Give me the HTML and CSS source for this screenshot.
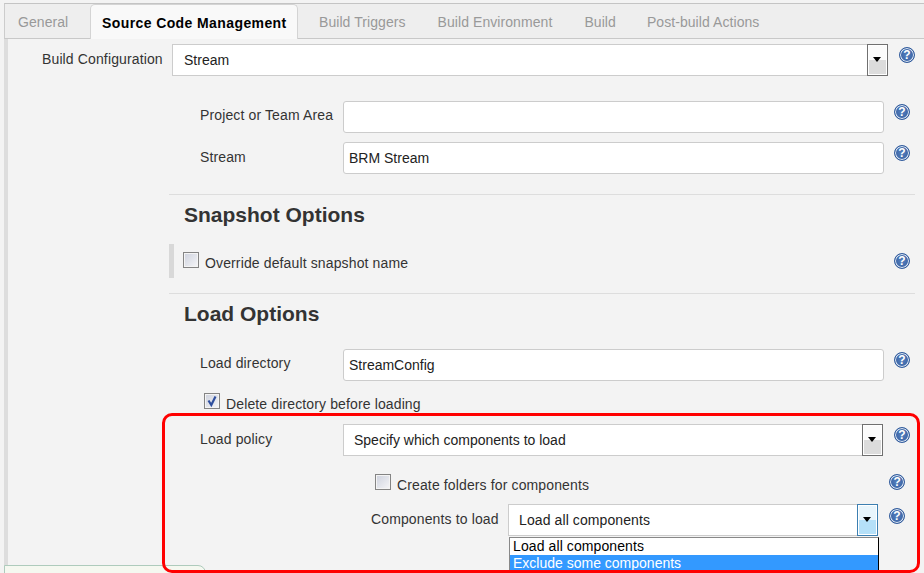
FILE: index.html
```html
<!DOCTYPE html>
<html lang="en">
<head>
<meta charset="utf-8">
<title>Source Code Management</title>
<link rel="stylesheet" href="styles.css">
</head>
<body>
<div class="page">
  <nav class="tabs">
    <span class="tab">General</span>
    <span class="tab tab-active">Source Code Management</span>
    <span class="tab">Build Triggers</span>
    <span class="tab">Build Environment</span>
    <span class="tab tab-build">Build</span>
    <span class="tab">Post-build Actions</span>
  </nav>
  <main class="content">
    <div class="row row-config">
      <label class="label label-config">Build Configuration</label>
      <div class="select select-config"><span>Stream</span><i class="arrow"></i></div>
      <span class="help help-config">?</span>
    </div>
    <div class="row row-project">
      <label class="label label-sub">Project or Team Area</label>
      <div class="input"></div>
      <span class="help">?</span>
    </div>
    <div class="row row-stream">
      <label class="label label-sub">Stream</label>
      <div class="input">BRM Stream</div>
      <span class="help">?</span>
    </div>
    <section class="section section-snapshot">
      <h2 class="heading">Snapshot Options</h2>
      <div class="override">
        <span class="check"></span>
        <span class="check-text">Override default snapshot name</span>
        <span class="help help-override">?</span>
      </div>
    </section>
    <section class="section section-load">
      <h2 class="heading">Load Options</h2>
      <div class="row row-dir">
        <label class="label label-sub">Load directory</label>
        <div class="input">StreamConfig</div>
        <span class="help">?</span>
      </div>
      <div class="delete">
        <span class="check check-on"><svg viewBox="0 0 14 14"><path d="M3.5 6.5l2.8 4.5 4.2-8.5" fill="none" stroke="#2f4f9e" stroke-width="2.2"/></svg></span>
        <span class="check-text">Delete directory before loading</span>
      </div>
      <div class="row row-policy">
        <label class="label label-sub">Load policy</label>
        <div class="select select-policy"><span>Specify which components to load</span><i class="arrow"></i></div>
        <span class="help">?</span>
      </div>
      <div class="row row-folders">
        <span class="check"></span>
        <span class="check-text">Create folders for components</span>
        <span class="help help-folders">?</span>
      </div>
      <div class="row row-components">
        <label class="label label-components">Components to load</label>
        <div class="select select-components">
          <span class="wide">Load all components</span><i class="arrow arrow-hot"></i>
          <ul class="dropdown">
            <li class="wide">Load all components</li>
            <li class="selected">Exclude some components</li>
          </ul>
        </div>
        <span class="help">?</span>
      </div>
    </section>
  </main>
  <div class="bottom-tab"></div>
  <div class="callout"></div>
</div>
</body>
</html>
```
FILE: styles.css
```css
* { box-sizing: border-box; }
html, body { margin: 0; height: 100%; }
body {
  background: #f3f3f3;
  font-family: "Liberation Sans", Arial, sans-serif;
  font-size: 14px;
  color: #333;
  overflow: hidden;
}
.page { position: relative; width: 924px; height: 573px; padding-top: 3px; overflow: hidden; }

.tabs {
  display: flex;
  height: 36px;
  margin-left: 4px;
  background: #eee;
  border-top: 1px solid #c4c4c4;
  border-left: 1px solid #ccc;
  border-bottom: 1px solid #c8c8c8;
}
.tab { padding: 10px 14px 0 13px; margin-right: 5px; color: #999; line-height: 16px; letter-spacing: 0.07px; }
.tab-build { margin-right: 4px; }
.tab-active {
  width: 208px;
  height: 35px;
  margin: 0 8px 0 0;
  padding: 10px 0 0 11px;
  color: #000;
  font-weight: bold;
  letter-spacing: 0.4px;
  background: #f9f9f9;
  border: 1px solid #d4d4d4;
  border-bottom: 0;
  border-radius: 5px 5px 0 0;
}
.tab:first-child { width: 85px; margin: 0; }

.content {
  height: 534px;
  margin-left: 4px;
  padding-top: 5px;
  border-left: 4px solid #ddd;
}
.row { display: flex; }
.label { line-height: 16px; white-space: nowrap; letter-spacing: 0.13px; }
.help {
  flex: none;
  width: 16px;
  height: 16px;
  font-size: 12px;
  font-weight: bold;
  line-height: 14px;
  text-align: center;
  color: #fff;
  background: radial-gradient(circle, #5580bd 0, #3b64a6 70%);
  border: 1px solid #2f5a9c;
  border-radius: 50%;
  box-shadow: inset 0 0 0 1px #e4ecf6;
}

.select {
  position: relative;
  display: flex;
  align-items: center;
  height: 32px;
  padding-left: 10px;
  color: #222;
  background: #fff;
  border: 1px solid #ccc;
}
.wide { letter-spacing: 0.1px; }
.arrow {
  position: absolute;
  top: -1px;
  right: -1px;
  width: 21px;
  height: 32px;
  background: linear-gradient(#fbfbfb 50%, #dcdcdc 50%);
  border: 1px solid #707070;
  box-shadow: inset 0 0 0 1px #fff;
}
.arrow::after {
  content: "";
  position: absolute;
  left: 5px;
  top: 12px;
  border: 4px solid transparent;
  border-top: 5px solid #000;
  border-bottom: 0;
}
.arrow-hot {
  background: linear-gradient(#e8f5fc 50%, #b5e0f8 50%);
  border-color: #3c7fb1;
}
.input {
  width: 541px;
  height: 32px;
  padding-left: 5px;
  line-height: 30px;
  color: #222;
  background: #fff;
  border: 1px solid #ccc;
  border-radius: 3px;
}

.row-config { padding-left: 34px; }
.label-config { width: 130px; margin-top: 7px; }
.select-config { width: 716px; padding-left: 11px; }
.help-config { margin: 3px 0 0 11px; }

.row-project, .row-stream, .row-dir, .row-policy { padding-left: 192px; }
.row-project { margin-top: 25px; }
.row-stream { margin-top: 9px; }
.label-sub { width: 143px; margin-top: 6px; }
.row-stream .label-sub { margin-top: 7px; }
.row .input + .help { margin: 3px 0 0 10px; }

.section { margin-left: 161px; width: 746px; border-top: 1px solid #ddd; }
.section-snapshot { margin-top: 20px; height: 99px; }
.heading { margin: 0; padding: 8px 0 0 15px; font-size: 21px; line-height: 24px; color: #333; }
.override {
  display: flex;
  align-items: center;
  height: 34px;
  margin-top: 17px;
  padding-left: 9px;
  border-left: 5px solid #d8d8d8;
}
.override .check { margin-top: -2px; }
.check {
  flex: none;
  display: block;
  width: 16px;
  height: 16px;
  background: linear-gradient(135deg, #cdd1dd, #f6f6f8);
  border: 1px solid #848484;
  box-shadow: inset 0 0 0 1px #f4f4f4;
}
.check svg { display: block; width: 14px; height: 14px; }
.check-text { margin-left: 6px; padding-top: 4px; line-height: 16px; color: #333; white-space: nowrap; letter-spacing: 0.13px; }
.help-override { margin-left: auto; margin-right: 5px; }

.section-load { margin-top: 0; height: 279px; margin-left: 161px; }
.section-load .row { margin-left: -161px; }
.row-dir { margin-top: 23px; }
.delete { display: flex; margin-top: 11px; padding-left: 35px; }
.delete .check { margin-top: 1px; }
.row-policy { margin-top: 12px; }
.row-policy .label-sub { margin-top: 7px; }
.select-policy { width: 540px; }
.row-policy .select + .help { margin: 3px 0 0 11px; }
.row-folders { margin-top: 18px; padding-left: 367px; }
.row-folders .check-text { padding-top: 3px; }
.help-folders { margin: 0 0 0 300px; }
.row-components { margin-top: 11px; padding-left: 363px; }
.label-components { width: 137px; margin-top: 7px; }
.select-components { width: 370px; }
.row-components .select + .help { margin: 4px 0 0 11px; }

.dropdown {
  position: absolute;
  top: 32px;
  left: 0;
  width: 370px;
  margin: 0;
  padding: 0;
  list-style: none;
  color: #000;
  background: #fff;
  border: 1px solid #000;
  border-top-color: #888;
  border-left-color: #888;
}
.dropdown li { height: 17px; padding-left: 3px; line-height: 17px; }
.selected { background: #39f; color: #fff; }

.bottom-tab {
  position: absolute;
  left: 4px;
  top: 565px;
  width: 202px;
  height: 12px;
  background: #f5f8f0;
  border: 1px solid #aecbbc;
  border-radius: 0 8px 0 0;
}
.callout {
  position: absolute;
  left: 162px;
  top: 413px;
  width: 758px;
  height: 160px;
  border: 3px solid #f00;
  border-radius: 10px;
}
```
